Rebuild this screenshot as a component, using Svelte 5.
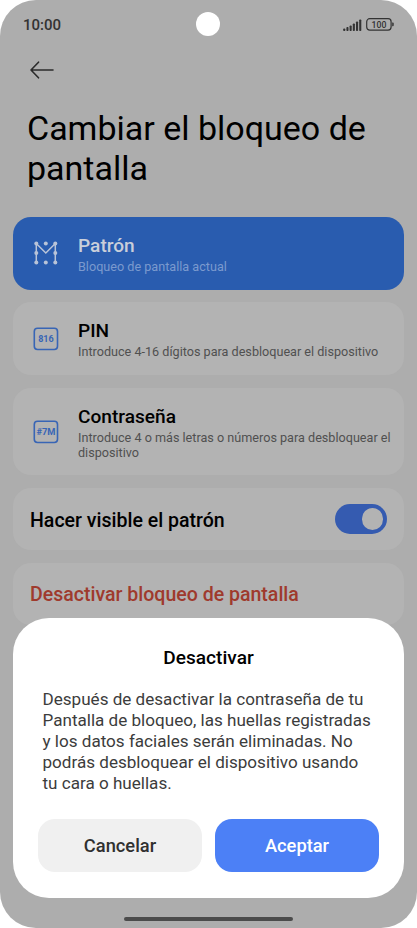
<script>
  const options = [
    { id: 'pattern', title: 'Patrón', detail: 'Bloqueo de pantalla actual' },
    { id: 'pin', title: 'PIN', detail: 'Introduce 4-16 dígitos para desbloquear el dispositivo', glyph: '816' },
    { id: 'password', title: 'Contraseña', detail: 'Introduce 4 o más letras o números para desbloquear el dispositivo', glyph: '#7M' }
  ];

  const bars = [2.5, 4, 5.5, 7.5, 9.5, 11.5];
  const dots = [[2, 2], [11.5, 2], [21, 2], [2, 11.5], [21, 11.5], [2, 21], [11.5, 21], [21, 21]];

  let current = $state('pattern');
  let visible = $state(true);
</script>

<div class="phone">
  <header class="status">
    <span class="time">10:00</span>
    <span class="camera"></span>
    <svg class="signal" width="19" height="12" viewBox="0 0 19 12">
      {#each bars as h, i}
        <rect x={0.2 + i * 3.2} y={12 - h} width="2.1" height={h} rx="0.8" fill="#333" />
      {/each}
    </svg>
    <svg class="battery" width="28" height="13" viewBox="0 0 28 13">
      <rect x="0.7" y="0.7" width="24.4" height="11.4" rx="3" fill="none" stroke="#333" stroke-width="1.2" />
      <path d="M26.2 4.6h.6q.9 0 .9.9v1.8q0 .9-.9.9h-.6z" fill="#333" />
      <text x="12.9" y="9.6" text-anchor="middle" textLength="15">100</text>
    </svg>
  </header>

  <svg class="back" width="24" height="18" viewBox="0 0 24 18">
    <path d="M8.5 1.2 1 9l7.5 7.8M1 9h22" />
  </svg>

  <h1>Cambiar el bloqueo de pantalla</h1>

  <main>
    {#each options as option}
      <button class="card option {option.id}" class:active={current === option.id} onclick={() => (current = option.id)}>
        {#if option.glyph}
          <svg class="icon" width="26" height="24" viewBox="0 0 26 24">
            <rect x="1.3" y="1.3" width="23.2" height="21.2" rx="3.2" />
            <text x="12.9" y="15" text-anchor="middle" textLength={option.id === 'pin' ? 15.5 : 19} lengthAdjust="spacingAndGlyphs">{option.glyph}</text>
          </svg>
        {:else}
          <svg class="icon" width="26" height="24" viewBox="-1.3 -.5 26 24">
            <path d="M2 21V2l9.5 9.5L21 2v19" />
            {#each dots as [x, y]}
              <circle cx={x} cy={y} r="2" />
            {/each}
          </svg>
        {/if}
        <span class="text">
          <span class="title">{option.title}</span>
          <span class="detail">{option.detail}</span>
        </span>
      </button>
    {/each}

    <div class="card row">
      <span class="title">Hacer visible el patrón</span>
      <button class="switch" class:on={visible} aria-label="Hacer visible el patrón" onclick={() => (visible = !visible)}>
        <span class="knob"></span>
      </button>
    </div>

    <div class="card row danger">
      <span class="title">Desactivar bloqueo de pantalla</span>
    </div>
  </main>

  <section class="dialog">
    <h2>Desactivar</h2>
    <p>Después de desactivar la contraseña de tu Pantalla de bloqueo, las huellas registradas y los datos faciales serán eliminadas. No podrás desbloquear el dispositivo usando tu cara o huellas.</p>
    <div class="actions">
      <button class="cancel">Cancelar</button>
      <button class="accept">Aceptar</button>
    </div>
  </section>

  <div class="home"></div>
</div>

<style>
  :global(body) {
    background: #fff;
  }

  .phone {
    position: relative;
    box-sizing: border-box;
    width: 417px;
    height: 928px;
    overflow: hidden;
    border-radius: 36px;
    background: #adadad;
    font-family: Roboto, sans-serif;
    color: #000;
  }

  button {
    border: 0;
    padding: 0;
    font: inherit;
    color: inherit;
    text-align: left;
  }

  .status {
    display: flex;
    align-items: center;
    height: 49px;
    padding: 0 23px;
  }

  .time {
    flex: 1;
    font-size: 15px;
    font-weight: 500;
    color: #333;
  }

  .camera {
    position: absolute;
    left: 196px;
    top: 12px;
    width: 24px;
    height: 24px;
    border-radius: 50%;
    background: #fff;
  }

  .signal {
    margin-right: 4px;
  }

  .battery text {
    font-size: 8.7px;
    font-weight: 500;
    fill: #333;
  }

  .back {
    display: block;
    margin: 12px 0 0 30px;
    fill: none;
    stroke: #2b2b2b;
    stroke-width: 1.6;
    stroke-linecap: round;
    stroke-linejoin: round;
  }

  h1 {
    margin: 29px 20px 28.5px 27px;
    font-size: 34px;
    line-height: 40px;
    font-weight: 400;
  }

  main {
    display: flex;
    flex-direction: column;
    gap: 12.7px;
    padding: 0 13px;
  }

  .card {
    display: flex;
    align-items: center;
    box-sizing: border-box;
    border-radius: 18px;
    background: #b3b3b3;
  }

  .title {
    font-size: 19.1px;
    line-height: 24px;
    font-weight: 500;
  }

  .option {
    height: 73px;
    padding: 0 8px 0 20px;
  }

  .password {
    height: 87.5px;
  }

  .text {
    display: flex;
    flex-direction: column;
    flex: 1;
    margin-left: 19px;
    padding-top: 1px;
  }

  .detail {
    font-size: 12.63px;
    line-height: 15px;
    margin-top: 1px;
    color: #505050;
  }

  .active {
    background: #295caf;
    color: #c9cfda;
  }

  .active .detail {
    color: #7b9ace;
  }

  .icon {
    flex: none;
  }

  .icon rect {
    fill: none;
    stroke: #3865b5;
    stroke-width: 1.6;
  }

  .icon text {
    font-size: 8.8px;
    font-weight: 700;
    fill: #3865b5;
  }

  .password .icon text {
    font-size: 8.2px;
  }

  .icon path {
    fill: none;
    stroke: #b9c4d8;
    stroke-width: 1.5;
  }

  .icon circle {
    fill: #b9c4d8;
  }

  .row {
    justify-content: space-between;
    height: 62px;
    padding: 0 17px;
  }

  .row .title {
    padding-top: 3px;
    font-size: 19.55px;
  }

  .danger {
    color: #9f3a2d;
  }

  .switch {
    display: flex;
    align-items: center;
    box-sizing: border-box;
    width: 52px;
    height: 30px;
    padding: 0 4px;
    border-radius: 15px;
    background: #8c8c8c;
  }

  .switch.on {
    justify-content: flex-end;
    background: #355bb0;
  }

  .knob {
    width: 21.5px;
    height: 21.5px;
    border-radius: 50%;
    background: #b3b3b3;
  }

  .dialog {
    position: absolute;
    left: 13px;
    right: 13px;
    top: 618px;
    box-sizing: border-box;
    height: 279.5px;
    padding: 27px 25px 26px;
    border-radius: 36px;
    background: #fff;
  }

  h2 {
    margin: 0;
    font-size: 19.1px;
    line-height: 25px;
    font-weight: 500;
    text-align: center;
  }

  p {
    margin: 19px 0 25px;
    padding: 0 6px 0 4.5px;
    font-size: 17.08px;
    line-height: 21px;
    color: #3c3c3c;
  }

  .actions {
    display: flex;
    gap: 13px;
  }

  .actions button {
    flex: 1;
    height: 53px;
    border-radius: 17px;
    font-size: 18.3px;
    font-weight: 500;
    text-align: center;
  }

  .cancel {
    background: #f0f0f0;
    color: #303030;
  }

  .actions .accept {
    background: #4c80f6;
    color: #fff;
  }

  .home {
    position: absolute;
    left: 124px;
    bottom: 7px;
    width: 169px;
    height: 4px;
    border-radius: 2px;
    background: #4b4b4b;
  }
</style>
